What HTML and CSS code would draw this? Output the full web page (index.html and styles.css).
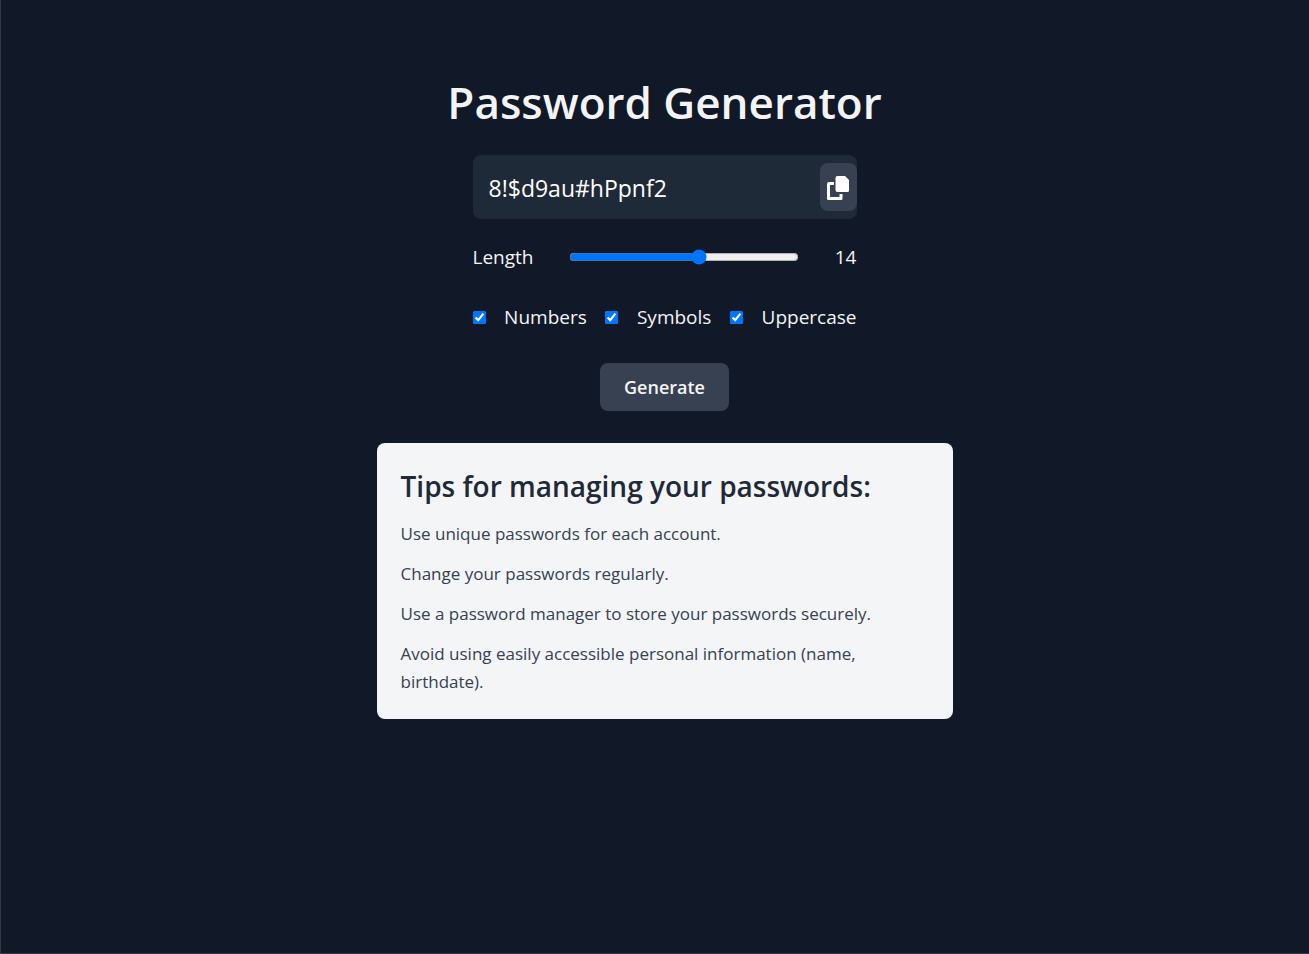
FILE: index.html
```html
<!DOCTYPE html>
<html lang="en">
<head>
<meta charset="utf-8">
<meta name="viewport" content="width=device-width, initial-scale=1">
<title>Password Generator</title>
<link rel="stylesheet" href="styles.css">
</head>
<body>
<main class="page">
  <h1 class="title">Password Generator</h1>
  <form class="generator">
    <div class="output">
      <input class="password" type="text" value="8!$d9au#hPpnf2" aria-label="Generated password" readonly>
      <button class="copy" type="button" aria-label="Copy password">
        <svg class="copy-icon" viewBox="0 0 22 24" aria-hidden="true"><path d="M10.500 0H18l4 4v10.500a1.500 1.500 0 0 1-1.500 1.500h-10A2 2 0 0 1 8.500 14V2a2 2 0 0 1 2-2zM2 6h5v3H3v12h9.500v-3h3v4.500a1.500 1.500 0 0 1-1.500 1.500H1.500A1.500 1.500 0 0 1 0 22.500V8a2 2 0 0 1 2-2z"/></svg>
      </button>
    </div>
    <div class="length">
      <label for="length">Length</label>
      <input class="slider" id="length" type="range" min="6" max="20" value="14">
      <output for="length">14</output>
    </div>
    <div class="options">
      <input class="check" id="numbers" type="checkbox" checked><label for="numbers">Numbers</label>
      <input class="check" id="symbols" type="checkbox" checked><label for="symbols">Symbols</label>
      <input class="check" id="uppercase" type="checkbox" checked><label for="uppercase">Uppercase</label>
    </div>
    <button class="generate" type="button">Generate</button>
  </form>
  <section class="tips">
    <h2 class="tips-title">Tips for managing your passwords:</h2>
    <ul class="tips-list">
      <li>Use unique passwords for each account.</li>
      <li>Change your passwords regularly.</li>
      <li>Use a password manager to store your passwords securely.</li>
      <li>Avoid using easily accessible personal information (name, birthdate).</li>
    </ul>
  </section>
</main>
</body>
</html>
```
FILE: styles.css
```css
* { box-sizing: border-box; }
body {
  margin: 0;
  min-height: 100vh;
  border-left: 1px solid #303943;
  border-bottom: 1px solid #303943;
  background: #111827;
  color: #f3f4f6;
  font-family: "Open Sans", "Noto Sans", sans-serif;
  font-size: 19px;
  line-height: 28px;
}
button, input { font: inherit; color: inherit; }
.page {
  display: flex;
  flex-direction: column;
  align-items: center;
  padding: 72px 16px 32px 35px;
}
.title {
  margin: 0 0 23px;
  font-size: 44px;
  line-height: 60px;
  font-weight: 600;
}
.generator {
  display: flex;
  flex-direction: column;
  align-items: center;
  width: 100%;
  max-width: 384px;
}
.output {
  display: flex;
  align-items: center;
  width: 100%;
  height: 64px;
  background: #1f2a38;
  border-radius: 8px;
}
.password {
  flex: 1;
  min-width: 0;
  padding: 2px 16px 0;
  border: 0;
  background: transparent;
  color: #fff;
  font-size: 23px;
}
.copy {
  display: flex;
  align-items: center;
  justify-content: center;
  width: 37px;
  height: 48px;
  padding: 2px 0 0;
  border: 0;
  border-radius: 8px;
  background: #374151;
}
.copy-icon { width: 22px; height: 24px; fill: #fff; }
.length {
  display: flex;
  align-items: center;
  justify-content: space-between;
  width: 100%;
  margin-top: 24px;
}
.slider {
  width: 60%;
  margin: 0;
  accent-color: #0075ff;
}
.options {
  display: flex;
  align-items: center;
  justify-content: space-between;
  width: 100%;
  margin-top: 32px;
}
.check { width: 13px; height: 13px; margin: 0; accent-color: #0075ff; }
.generate {
  margin-top: 32px;
  padding: 10px 24px;
  border: 0;
  border-radius: 8px;
  background: #374151;
  font-size: 18px;
  font-weight: 600;
}
.tips {
  width: 100%;
  max-width: 576px;
  margin-top: 32px;
  padding: 25px 24px 23px;
  border-radius: 8px;
  background: #f3f5f7;
  color: #374151;
}
.tips-title {
  margin: 0 0 16px;
  color: #1f2937;
  font-size: 28px;
  line-height: 36px;
  font-weight: 600;
}
.tips-list {
  display: grid;
  gap: 12px;
  margin: 0;
  padding: 0;
  list-style: none;
  font-size: 17px;
}
```
